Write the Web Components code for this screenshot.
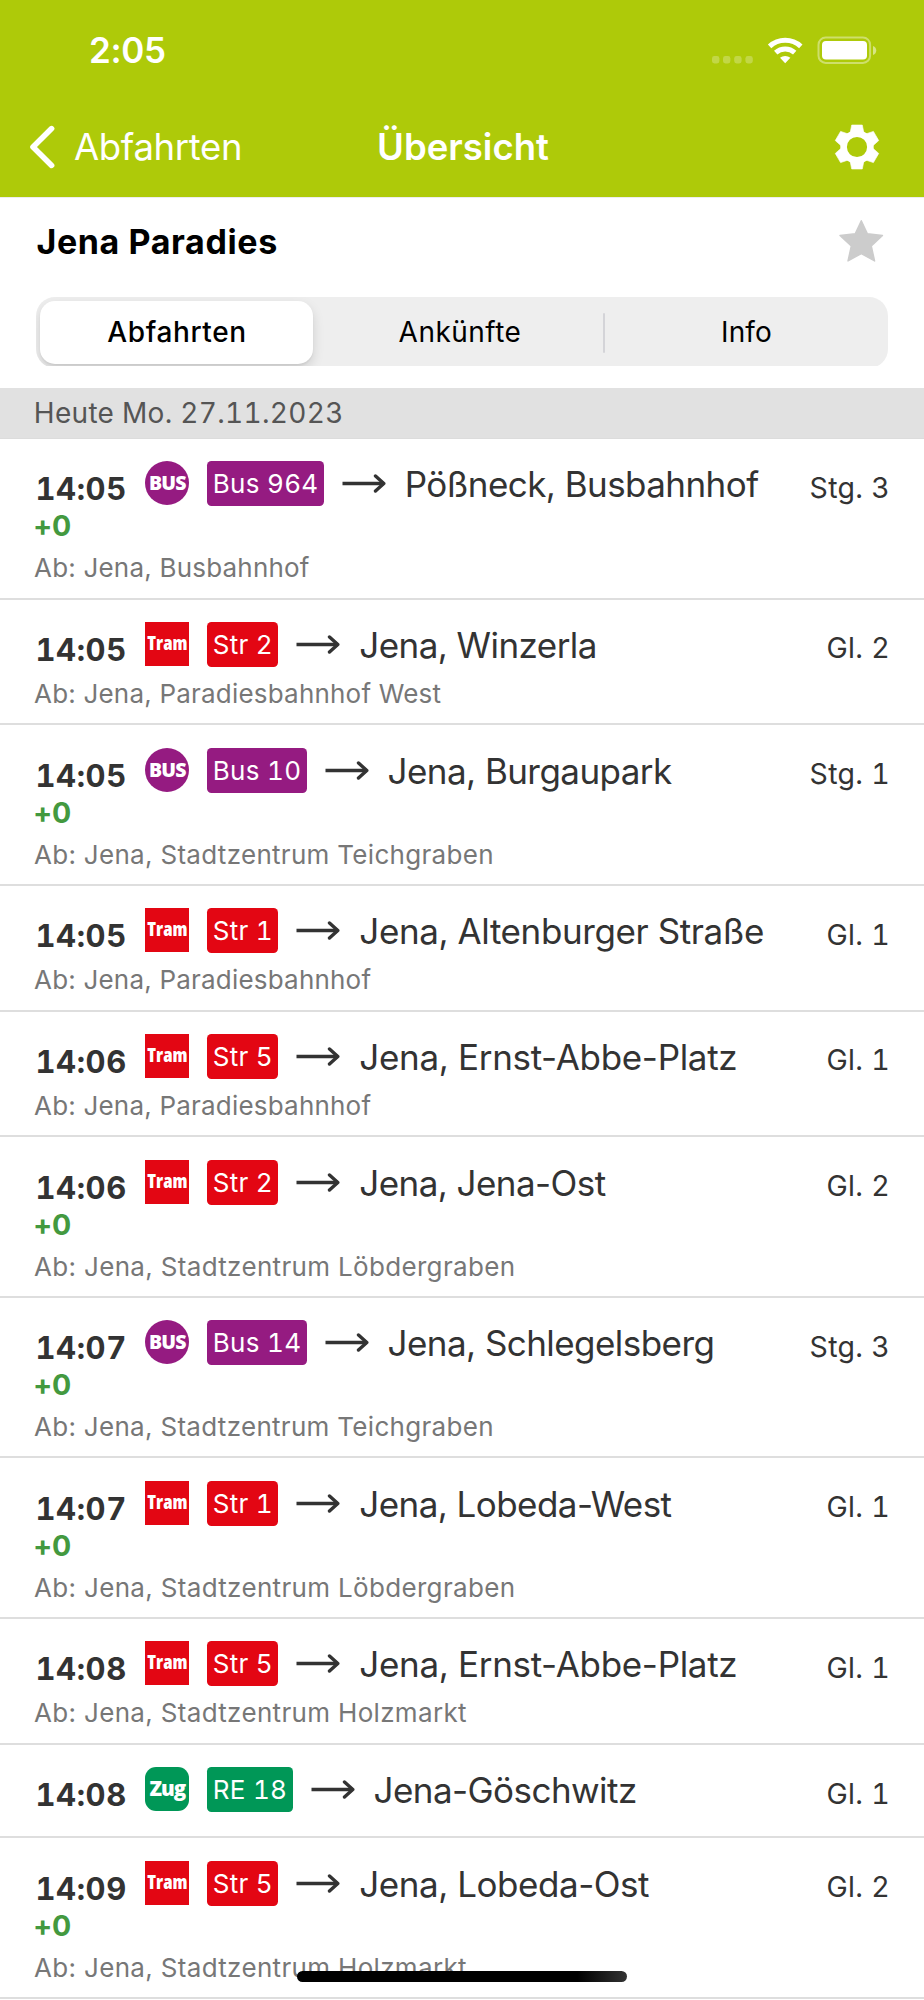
<!DOCTYPE html>
<html lang="de">
<head>
<meta charset="utf-8">
<title>Übersicht</title>
<style>
  body {
    margin: 0;
    width: 924px;
    height: 2000px;
    overflow: hidden;
    background: #fff;
    font-family: Inter, "Liberation Sans", sans-serif;
    color: #333;
  }
</style>
</head>
<body>
<departure-app></departure-app>

<script>
class StatusBar extends HTMLElement {
  constructor() {
    super();
    this.attachShadow({mode: 'open'}).innerHTML = `
      <style>
        :host {
          display: flex;
          justify-content: space-between;
          align-items: flex-start;
          box-sizing: border-box;
          height: 100px;
          padding: 30.4px 47px 0 89px;
          color: #fff;
        }
        .time {
          font-size: 35px;
          font-weight: 600;
          line-height: 40px;
          letter-spacing: -.35px;
        }
        svg { display: block; margin-top: 4.6px; }
      </style>
      <span class="time"><slot></slot></span>
      <svg width="165" height="30" viewBox="712 35 165 30" fill="#fff">
        <g fill-opacity=".25">
          <rect x="712" y="56" width="7.4" height="7.4" rx="2.4"/>
          <rect x="723" y="56" width="7.4" height="7.4" rx="2.4"/>
          <rect x="734.2" y="56" width="7.4" height="7.4" rx="2.4"/>
          <rect x="745.4" y="56" width="7.4" height="7.4" rx="2.4"/>
        </g>
        <path d="M785.2 63.2l-5.2-5.4a8 8 0 0 1 10.4 0z"/>
        <path d="M775.7 52.6a14.2 14.2 0 0 1 19 0M769.6 46.3a23 23 0 0 1 31.2 0" fill="none" stroke="#fff" stroke-width="5"/>
        <rect x="818.5" y="37.5" width="51.6" height="25.4" rx="7.2" fill="none" stroke="#fff" stroke-opacity=".4" stroke-width="2"/>
        <rect x="822" y="41" width="45" height="18.6" rx="4"/>
        <path d="M873 46c4.4 1.6 4.4 7.4 0 9z" fill-opacity=".5"/>
      </svg>
    `;
  }
}
customElements.define('status-bar', StatusBar);

class NavBar extends HTMLElement {
  constructor() {
    super();
    this.attachShadow({mode: 'open'}).innerHTML = `
      <style>
        :host {
          display: grid;
          grid-template-columns: 1fr auto 1fr;
          align-items: center;
          box-sizing: border-box;
          height: 97px;
          padding: 0 44px 3.6px 29px;
          color: #fff;
          font-size: 36.5px;
        }
        svg { display: block; }
        .back {
          display: flex;
          align-items: center;
          gap: 17px;
          letter-spacing: -.34px;
        }
        .title { font-weight: 600; padding-left: 17px; }
        .gear { justify-self: end; }
      </style>
      <div class="back">
        <svg width="28" height="44" viewBox="0 0 28 44" fill="none" stroke="#fff" stroke-width="5.6" stroke-linecap="round" stroke-linejoin="round">
          <path d="M22.6 3.6L4 22l18.6 18.4"/>
        </svg>
        <span><slot name="back"></slot></span>
      </div>
      <div class="title"><slot></slot></div>
      <svg class="gear" width="46" height="46" viewBox="-23 -23 46 46" fill="#fff">
        <circle r="13.4" fill="none" stroke="#fff" stroke-width="6.6"/>
        ${[0, 60, 120, 180, 240, 300].map(deg => `
          <path transform="rotate(${deg})" d="M-6.9-14L-5.3-22H5.3L6.9-14z" stroke="#fff" stroke-width=".6" stroke-linejoin="round"/>
        `).join('')}
      </svg>
    `;
  }
}
customElements.define('nav-bar', NavBar);

class StationHeader extends HTMLElement {
  constructor() {
    super();
    this.attachShadow({mode: 'open'}).innerHTML = `
      <style>
        :host {
          display: flex;
          justify-content: space-between;
          align-items: flex-start;
          box-sizing: border-box;
          height: 100px;
          padding: 20.5px 40px 0 36.5px;
          border-top: 1px solid #ededed;
          color: #000;
        }
        h1 {
          margin: 0;
          font-size: 34px;
          font-weight: 700;
          line-height: 45px;
          letter-spacing: .6px;
        }
        svg { display: block; }
      </style>
      <h1><slot></slot></h1>
      <svg width="46" height="46" viewBox="0 0 46 46">
        <path d="M23.3 1.7L29.4 14.8L44.5 16.5L33.3 26.9L36.6 42L23.3 34.7L10 42L13.3 26.9L2 16.5L17.2 14.8z" fill="#ccc" stroke="#ccc" stroke-width="1.4" stroke-linejoin="round"/>
      </svg>
    `;
  }
}
customElements.define('station-header', StationHeader);

class SegmentedControl extends HTMLElement {
  constructor() {
    super();
    this.attachShadow({mode: 'open'}).innerHTML = `
      <style>
        :host {
          display: block;
          height: 69px;
          margin: 0 36px 22px;
          overflow: hidden;
        }
        .track {
          display: grid;
          grid-template-columns: 273px 290px 2px 1fr;
          align-items: center;
          box-sizing: border-box;
          height: 71px;
          padding: 4px;
          border-radius: 19px;
          overflow: hidden;
          background: #eee;
          color: #000;
          font-size: 28px;
          text-align: center;
          letter-spacing: .48px;
        }
        .item { line-height: 63px; padding-left: 4px; }
        .selected {
          height: 63px;
          padding-left: 1px;
          border-radius: 15px;
          background: #fff;
          font-weight: 500;
          letter-spacing: .62px;
          box-shadow: 0 5px 12px rgba(0, 0, 0, .13), 0 2px 2px rgba(0, 0, 0, .05);
        }
        .last { letter-spacing: .1px; }
        .divider { height: 40px; background: #d4d4d8; border-radius: 1px; }
      </style>
      <div class="track">
        <div class="item selected">Abfahrten</div>
        <div class="item">Ankünfte</div>
        <div class="divider"></div>
        <div class="item last">Info</div>
      </div>
    `;
  }
}
customElements.define('segmented-control', SegmentedControl);

class DateHeader extends HTMLElement {
  constructor() {
    super();
    this.attachShadow({mode: 'open'}).innerHTML = `
      <style>
        :host {
          display: block;
          box-sizing: border-box;
          height: 51.1px;
          padding-left: 33.8px;
          background: #e1e1e1;
          border-bottom: 1px solid #dcdcdc;
          color: #555;
          font-size: 28px;
          line-height: 51px;
          letter-spacing: .3px;
          font-feature-settings: "tnum";
        }
      </style>
      <slot></slot>
    `;
  }
}
customElements.define('date-header', DateHeader);

// Sign of the vehicle type: bus, tram or train
class TransportSign extends HTMLElement {
  constructor() {
    super();
    this.attachShadow({mode: 'open'}).innerHTML = `
      <style>
        :host {
          display: block;
          flex: none;
          width: 44px;
          height: 44px;
          color: #fff;
          font-family: "Open Sans", sans-serif;
          font-weight: 800;
          text-align: center;
          white-space: nowrap;
        }
        :host([type="bus"]) {
          background: #951b81;
          border-radius: 50%;
          font-size: 19.5px;
          letter-spacing: -.8px;
          line-height: 43px;
        }
        :host([type="tram"]) {
          background: #e30613;
          font-size: 19px;
          font-stretch: 78%;
          line-height: 42px;
        }
        :host([type="train"]) {
          background: #009757;
          border-radius: 11px;
          font-size: 20.5px;
          letter-spacing: -.9px;
          line-height: 43px;
        }
      </style>
      <slot></slot>
    `;
  }
}
customElements.define('transport-sign', TransportSign);

const SIGNS = {bus: 'BUS', tram: 'Tram', train: 'Zug'};

class DepartureItem extends HTMLElement {
  constructor() {
    super();
    this.attachShadow({mode: 'open'});
  }

  set departure(departure) {
    this._departure = departure;
    this.render();
  }

  render() {
    const {time, type, line, to, platform, delay, from, tracking = -.56, fromTracking = .2} = this._departure;
    this.shadowRoot.innerHTML = `
      <style>
        :host {
          display: block;
          padding: 22.4px 34px ${from ? '14.3px' : '24.3px'} 35px;
          border-bottom: 2px solid #dedede;
        }
        .main {
          display: flex;
          align-items: flex-start;
          height: 45px;
          line-height: 45px;
          white-space: nowrap;
        }
        .time {
          width: 110.4px;
          padding: 5px 0 0 .5px;
          box-sizing: border-box;
          font-size: 31px;
          font-weight: 700;
          letter-spacing: .55px;
          font-feature-settings: "tnum";
        }
        .line {
          margin-left: 18px;
          padding: 0 5.3px;
          border-radius: 4.5px;
          color: #fff;
          font-size: 26px;
          letter-spacing: .3px;
          font-feature-settings: "tnum";
        }
        .bus { background: #951b81; }
        .tram { background: #e30613; }
        .train { background: #009757; }
        .arrow { flex: none; margin: 13px 18px 0; }
        .to {
          flex: 1;
          padding-top: 1px;
          font-size: 35px;
          letter-spacing: ${tracking}px;
        }
        .platform {
          padding-top: 3.4px;
          font-size: 28.5px;
          letter-spacing: .3px;
          font-feature-settings: "tnum";
        }
        .delay {
          height: 30.1px;
          padding-top: 4.8px;
          color: #43993f;
          font-size: 28.5px;
          font-weight: 700;
          line-height: 29.9px;
          letter-spacing: -.3px;
          text-indent: -2px;
        }
        .from {
          margin-top: 12px;
          color: #777;
          font-size: 26px;
          line-height: 30px;
          letter-spacing: ${fromTracking}px;
          text-indent: -1px;
        }
      </style>
      <div class="main">
        <span class="time">${time}</span>
        <transport-sign type="${type}">${SIGNS[type]}</transport-sign>
        <span class="line ${type}">${line}</span>
        <svg class="arrow" width="45" height="20" viewBox="0 0 45 20" fill="none" stroke="#333" stroke-width="3.4">
          <path d="M.5 9.5H42"/><path d="M33.5 2l8.3 7.5-8.3 7.5" stroke-linecap="round" stroke-linejoin="round"/>
        </svg>
        <span class="to">${to}</span>
        <span class="platform">${platform}</span>
      </div>
      ${delay ? `<div class="delay">${delay}</div>` : ''}
      ${from ? `<div class="from">Ab: ${from}</div>` : ''}
    `;
  }
}
customElements.define('departure-item', DepartureItem);

const departures = [
  {time: '14:05', type: 'bus', line: 'Bus 964', to: 'Pößneck, Busbahnhof', platform: 'Stg. 3', delay: '+0', from: 'Jena, Busbahnhof'},
  {time: '14:05', type: 'tram', line: 'Str 2', to: 'Jena, Winzerla', platform: 'Gl. 2', from: 'Jena, Paradiesbahnhof West'},
  {time: '14:05', type: 'bus', line: 'Bus 10', to: 'Jena, Burgaupark', platform: 'Stg. 1', delay: '+0', from: 'Jena, Stadtzentrum Teichgraben', fromTracking: .3},
  {time: '14:05', type: 'tram', line: 'Str 1', to: 'Jena, Altenburger Straße', platform: 'Gl. 1', from: 'Jena, Paradiesbahnhof', tracking: -.4},
  {time: '14:06', type: 'tram', line: 'Str 5', to: 'Jena, Ernst-Abbe-Platz', platform: 'Gl. 1', from: 'Jena, Paradiesbahnhof', tracking: -.32},
  {time: '14:06', type: 'tram', line: 'Str 2', to: 'Jena, Jena-Ost', platform: 'Gl. 2', delay: '+0', from: 'Jena, Stadtzentrum Löbdergraben', fromTracking: .33},
  {time: '14:07', type: 'bus', line: 'Bus 14', to: 'Jena, Schlegelsberg', platform: 'Stg. 3', delay: '+0', from: 'Jena, Stadtzentrum Teichgraben', fromTracking: .3},
  {time: '14:07', type: 'tram', line: 'Str 1', to: 'Jena, Lobeda-West', platform: 'Gl. 1', delay: '+0', from: 'Jena, Stadtzentrum Löbdergraben', fromTracking: .33},
  {time: '14:08', type: 'tram', line: 'Str 5', to: 'Jena, Ernst-Abbe-Platz', platform: 'Gl. 1', from: 'Jena, Stadtzentrum Holzmarkt', tracking: -.32, fromTracking: .33},
  {time: '14:08', type: 'train', line: 'RE 18', to: 'Jena-Göschwitz', platform: 'Gl. 1'},
  {time: '14:09', type: 'tram', line: 'Str 5', to: 'Jena, Lobeda-Ost', platform: 'Gl. 2', delay: '+0', from: 'Jena, Stadtzentrum Holzmarkt', tracking: -.46, fromTracking: .33},
];

class DepartureApp extends HTMLElement {
  constructor() {
    super();
    this.attachShadow({mode: 'open'}).innerHTML = `
      <style>
        :host {
          display: block;
          position: relative;
          height: 2000px;
          overflow: hidden;
        }
        header { background: #aeca09; }
        /* home indicator, floats over the list */
        .home {
          position: absolute;
          left: 297px;
          bottom: 18px;
          width: 330px;
          height: 11px;
          border-radius: 6px;
          background: linear-gradient(90deg, #000 85%, #333);
        }
      </style>
      <header>
        <status-bar>2:05</status-bar>
        <nav-bar><span slot="back">Abfahrten</span>Übersicht</nav-bar>
      </header>
      <station-header>Jena Paradies</station-header>
      <segmented-control></segmented-control>
      <date-header>Heute Mo. 27.11.2023</date-header>
      <main></main>
      <div class="home"></div>
    `;
    const list = this.shadowRoot.querySelector('main');
    departures.forEach(departure => {
      const item = document.createElement('departure-item');
      item.departure = departure;
      list.appendChild(item);
    });
  }
}
customElements.define('departure-app', DepartureApp);
</script>
</body>
</html>
